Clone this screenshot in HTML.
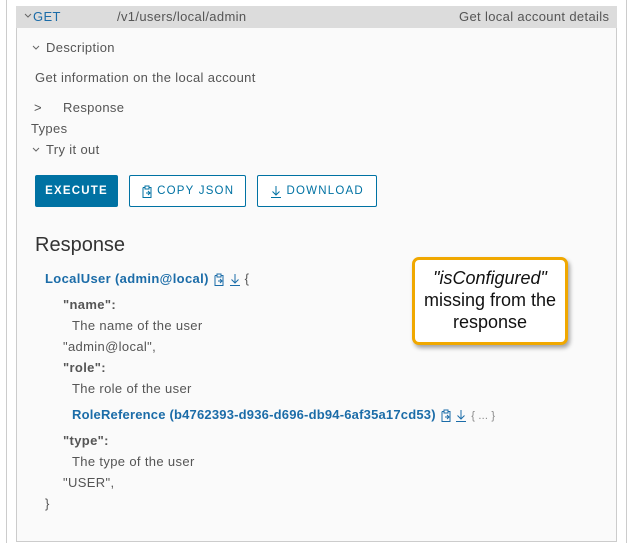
<!DOCTYPE html>
<html><head><style>
body{margin:0;width:642px;height:543px;background:#fff;font-family:"Liberation Sans",sans-serif;position:relative;overflow:hidden;color:#555}
.a{position:absolute;white-space:nowrap}
.vl{position:absolute;top:0;height:543px;width:1px;background:#ccc}
#panel{position:absolute;left:16px;top:6px;width:599px;height:534px;background:#fafafa;border:1px solid #ccc}
#hdr{position:absolute;left:16px;top:6px;width:601px;height:22px;background:#dcdcdc}
.t13{font-size:13px;letter-spacing:0.35px}
.btn{position:absolute;top:175px;height:32px;box-sizing:border-box;font-size:11.5px;letter-spacing:1.2px;font-weight:bold;display:flex;align-items:center;justify-content:center}
.ob{border:1px solid #0072a3;color:#0072a3;background:#fff;border-radius:2px;font-weight:normal}
.blue{color:#1b6ca8}
.k{font-weight:bold;color:#555}
svg{vertical-align:middle}
</style></head><body>
<div class="vl" style="left:6px"></div>
<div class="vl" style="left:626px"></div>
<div id="panel"></div>
<div id="hdr"></div>
<svg class="a" style="left:24px;top:13px" width="8" height="6"><path d="M1 1l3 3 3-3" stroke="#666" fill="none"/></svg>
<div class="a t13" style="left:33px;top:9px;color:#1b6ca8">GET</div>
<div class="a t13" style="left:117px;top:9px;color:#555">/v1/users/local/admin</div>
<div class="a t13" style="left:459px;top:9px;color:#555">Get local account details</div>
<svg class="a" style="left:32px;top:45px" width="8" height="6"><path d="M1 1l3 3 3-3" stroke="#666" fill="none"/></svg>
<div class="a t13" style="left:46px;top:40px">Description</div>
<div class="a t13" style="left:35px;top:70px">Get information on the local account</div>
<div class="a t13" style="left:34px;top:100px">&gt;</div>
<div class="a t13" style="left:63px;top:100px">Response</div>
<div class="a t13" style="left:31px;top:121px">Types</div>
<svg class="a" style="left:32px;top:147px" width="8" height="6"><path d="M1 1l3 3 3-3" stroke="#666" fill="none"/></svg>
<div class="a t13" style="left:46px;top:142px">Try it out</div>
<div class="btn" style="left:35px;width:83px;background:#0072a3;color:#fff;border-radius:2px">EXECUTE</div>
<div class="btn ob" style="left:129px;width:117px"><svg width="12" height="13"><path d="M2 2.5h2M8 2.5h2v10H2V2.5M4 1h4v3H4z M5 8h4M7 6l2 2-2 2" stroke="#0072a3" fill="none"/></svg>&nbsp;COPY JSON</div>
<div class="btn ob" style="left:257px;width:120px"><svg width="12" height="13"><path d="M6 1v9M2.5 6.5L6 10l3.5-3.5M1 12.5h10" stroke="#0072a3" fill="none"/></svg>&nbsp;DOWNLOAD</div>
<div class="a" style="left:35px;top:234px;font-size:20px;color:#333">Response</div>
<div class="a t13" style="left:45px;top:271px"><span class="blue" style="font-weight:bold">LocalUser (admin@local)</span> <svg width="12" height="13"><path d="M2 2.5h2M8 2.5h2v10H2V2.5M4 1h4v3H4z M5 8h4M7 6l2 2-2 2" stroke="#1b6ca8" fill="none"/></svg> <svg width="12" height="13"><path d="M6 1v9M2.5 6.5L6 10l3.5-3.5M1 12.5h10" stroke="#1b6ca8" fill="none"/></svg> {</div>
<div class="a t13 k" style="left:63px;top:297px">"name":</div>
<div class="a t13" style="left:72px;top:318px">The name of the user</div>
<div class="a t13" style="left:63px;top:339px">"admin@local",</div>
<div class="a t13 k" style="left:63px;top:360px">"role":</div>
<div class="a t13" style="left:72px;top:381px">The role of the user</div>
<div class="a t13" style="left:72px;top:407px;letter-spacing:0.2px"><span class="blue" style="font-weight:bold">RoleReference (b4762393-d936-d696-db94-6af35a17cd53)</span> <svg width="12" height="13"><path d="M2 2.5h2M8 2.5h2v10H2V2.5M4 1h4v3H4z M5 8h4M7 6l2 2-2 2" stroke="#1b6ca8" fill="none"/></svg> <svg width="12" height="13"><path d="M6 1v9M2.5 6.5L6 10l3.5-3.5M1 12.5h10" stroke="#1b6ca8" fill="none"/></svg> <span style="font-size:11px;color:#888">{ ... }</span></div>
<div class="a t13 k" style="left:63px;top:433px">"type":</div>
<div class="a t13" style="left:72px;top:454px">The type of the user</div>
<div class="a t13" style="left:63px;top:475px">"USER",</div>
<div class="a t13" style="left:45px;top:496px">}</div>
<div class="a" style="left:412px;top:257px;width:156px;height:88px;border:3px solid #f0a800;border-radius:7px;background:#fff;box-shadow:2px 3px 4px rgba(0,0,0,.35);color:#111;font-size:18px;text-align:center;line-height:22px;padding-top:7px;box-sizing:border-box">
<i>"isConfigured"</i><br>missing from the<br>response</div>
</body></html>
